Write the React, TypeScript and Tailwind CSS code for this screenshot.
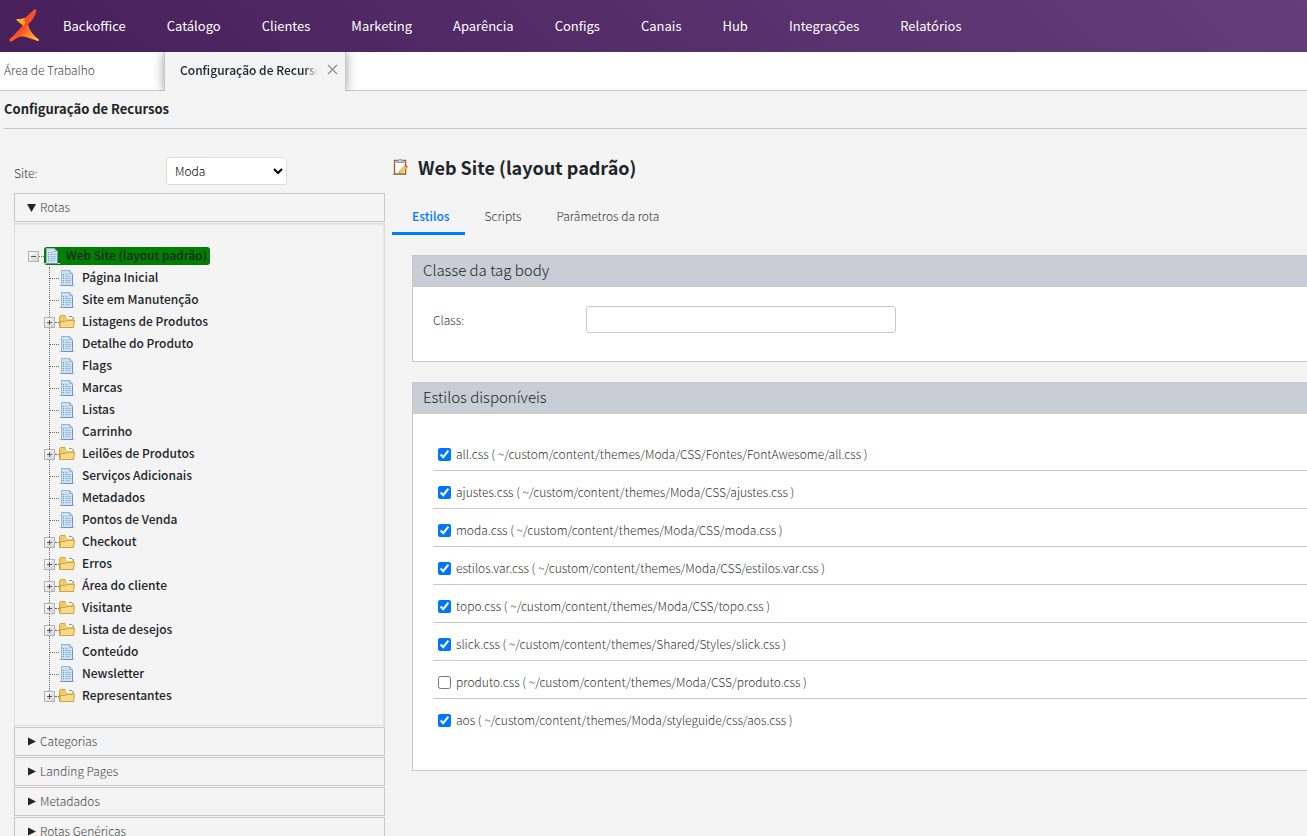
import React, { useState } from "react";
import { X } from "lucide-react";

const nav = ["Backoffice", "Catálogo", "Clientes", "Marketing", "Aparência", "Configs", "Canais", "Hub", "Integrações", "Relatórios"];

type Route = { name: string; folder?: boolean };

const routes: Route[] = [
  { name: "Página Inicial" },
  { name: "Site em Manutenção" },
  { name: "Listagens de Produtos", folder: true },
  { name: "Detalhe do Produto" },
  { name: "Flags" },
  { name: "Marcas" },
  { name: "Listas" },
  { name: "Carrinho" },
  { name: "Leilões de Produtos", folder: true },
  { name: "Serviços Adicionais" },
  { name: "Metadados" },
  { name: "Pontos de Venda" },
  { name: "Checkout", folder: true },
  { name: "Erros", folder: true },
  { name: "Área do cliente", folder: true },
  { name: "Visitante", folder: true },
  { name: "Lista de desejos", folder: true },
  { name: "Conteúdo" },
  { name: "Newsletter" },
  { name: "Representantes", folder: true },
];

const styles = [
  { name: "all.css", path: "~/custom/content/themes/Moda/CSS/Fontes/FontAwesome/all.css", on: true },
  { name: "ajustes.css", path: "~/custom/content/themes/Moda/CSS/ajustes.css", on: true },
  { name: "moda.css", path: "~/custom/content/themes/Moda/CSS/moda.css", on: true },
  { name: "estilos.var.css", path: "~/custom/content/themes/Moda/CSS/estilos.var.css", on: true },
  { name: "topo.css", path: "~/custom/content/themes/Moda/CSS/topo.css", on: true },
  { name: "slick.css", path: "~/custom/content/themes/Shared/Styles/slick.css", on: true },
  { name: "produto.css", path: "~/custom/content/themes/Moda/CSS/produto.css", on: false },
  { name: "aos", path: "~/custom/content/themes/Moda/styleguide/css/aos.css", on: true },
];

function Logo() {
  return (
    <svg viewBox="12 15 96 102" className="h-[34px] w-8" aria-hidden="true">
      <defs>
        <linearGradient id="blade" x1="1" y1="0" x2="0" y2="1">
          <stop offset="0" stopColor="#ff6a26" />
          <stop offset="0.5" stopColor="#ff4424" />
          <stop offset="1" stopColor="#ff5a24" />
        </linearGradient>
        <linearGradient id="body" x1="0" y1="0.2" x2="1" y2="0.8">
          <stop offset="0.1" stopColor="#ff4322" />
          <stop offset="0.5" stopColor="#ff6a22" />
          <stop offset="1" stopColor="#ffbe2c" />
        </linearGradient>
      </defs>
      <path d="M60 60L72 58C74 74 84 92 104 106C106 110 104 112 100 111C84 106 66 96 48 98C38 100 30 108 22 112C17 113 15 109 18 105C34 92 46 76 60 60Z" fill="url(#body)" />
      <path d="M90 18C94 14 98 17 96 23C92 38 84 50 72 60C62 70 54 84 44 98C36 102 28 110 22 112C17 113 15 109 18 105C32 94 46 78 58 62L60 46Z" fill="url(#blade)" />
      <path d="M40 45C47 44 56 44 66 41L72 50L59 66C52 60 44 56 38 49C36 47 37 45 40 45Z" fill="#ffab2a" />
      <path d="M90 18C94 14 98 17 96 23C92 38 84 50 72 60L60 64C66 56 64 50 58 48Z" fill="#ff4c25" />
    </svg>
  );
}

function PageIcon() {
  return (
    <svg viewBox="0 0 16 16" className="size-4 shrink-0" aria-hidden="true">
      <path d="M0 15.500H16" stroke="#c9ccd0" />
      <path d="M2.500 .5H10.500L13.500 3.500V15.500H2.500Z" fill="#cde1f4" stroke="#93b6d6" />
      <path d="M2.500 15.500H13.500V5" fill="none" stroke="#7093c4" />
      <path d="M10.500 .5V3.500H13.500Z" fill="#f4fafe" stroke="#8fb2d4" />
      <path d="M6 4.500H9M6 6.500H12M6 8.500H12M6 10.500H12M6 12.500H11" stroke="#a3bed9" />
      <path d="M4 4.500H5M4 8.500H5M4 12.500H5" stroke="#5aa05f" />
      <path d="M4 6.500H5M4 10.500H5" stroke="#7186cb" />
    </svg>
  );
}

function FolderIcon() {
  return (
    <svg viewBox="0 0 16 16" className="size-4 shrink-0" aria-hidden="true">
      <path d="M.5 13.500V2.500L1.500 1.500H6L7.500 3.500H14.500V13.500Z" fill="#f0cb6e" stroke="#d3a23f" />
      <path d="M7 2H13V5H8Z" fill="#fff" />
      <path d="M10 2H13V3H10Z" fill="#4aa5ec" />
      <path d="M1 13.500L1.500 7.500H6.500L8 6.500H15.500L14.500 13.500Z" fill="#f9d98a" stroke="#d3a23f" />
    </svg>
  );
}

function Expander({ open }: { open?: boolean }) {
  return (
    <svg viewBox="0 0 11 11" className="size-[11px] shrink-0" aria-hidden="true">
      <defs>
        <linearGradient id="box" x1="0" y1="0" x2="1" y2="1">
          <stop offset="0" stopColor="#fff" />
          <stop offset="1" stopColor="#cfcfcf" />
        </linearGradient>
      </defs>
      <rect x=".5" y=".5" width="10" height="10" fill="url(#box)" stroke="#b4b4b4" />
      <path d={open ? "M3 5.500H8" : "M3 5.500H8M5.500 3V8"} stroke="#555" />
    </svg>
  );
}

function NotepadIcon() {
  return (
    <svg viewBox="0 0 16 16" className="size-4 shrink-0" aria-hidden="true">
      <path d="M0 15.500H15" stroke="#cfcfcf" />
      <path d="M2.500 1.500H13.500V15H2.500Z" fill="#fff" stroke="#9a6232" strokeWidth="1.400" />
      <path d="M4.500 3.500V1.500H6.500L7.500 .5H9L10 1.500H12V3.500Z" fill="#c9c9c9" stroke="#8a8a8a" strokeWidth=".8" />
      <path d="M7 14.500L7.500 12L13 6.800L15 8.800L9.500 14Z" fill="#f2d35c" stroke="#a98724" strokeWidth=".7" />
      <path d="M13 6.800L14 6L15.800 7.800L15 8.800Z" fill="#d8434b" />
    </svg>
  );
}

function Accordion({ title, open }: { title: string; open?: boolean }) {
  return (
    <button className="flex h-[29px] w-full items-center gap-1 border border-[#c8c8c8] px-3 text-left text-xs font-light text-[#444]">
      <svg viewBox="0 0 9 9" className="size-[9px] fill-[#212529]" aria-hidden="true">
        <path d={open ? "M0 1H9L4.500 9Z" : "M1 0.500L9 4.500L1 8.500Z"} />
      </svg>
      <span className="pb-0.5">{title}</span>
    </button>
  );
}

function Panel({ title, children }: { title: string; children: React.ReactNode }) {
  return (
    <section className="border border-r-0 border-[#c8c8c8] bg-white">
      <h2 className="flex h-[31px] items-center border-b border-[#c8c8c8] bg-[#c8ced5] px-[10px] pb-0.5 text-[15px] font-light text-[#212529]">{title}</h2>
      {children}
    </section>
  );
}

export default function App() {
  const [tab, setTab] = useState("Estilos");
  return (
    <div className="min-h-screen overflow-x-hidden bg-[#f4f4f4] font-['Noto_Sans_CJK_SC',sans-serif] text-xs text-[#212529]">
      <header className="flex h-[52px] items-center bg-linear-[45deg,#461f5b,#643d7a] pl-2">
        <Logo />
        <nav className="ml-[23px] flex gap-[41px] text-[13px] text-white">
          {nav.map((n) => (
            <a key={n} href="#" className="whitespace-nowrap">{n}</a>
          ))}
        </nav>
      </header>

      <div className="flex h-[39px] bg-white">
        <a href="#" className="flex w-[164px] items-center border-b border-[#c8c8c8] px-1 pb-0.5 font-light text-[#444]">Área de Trabalho</a>
        <div className="flex w-[182px] items-center border-x border-[#c8c8c8] bg-[#f4f4f4] pb-1 pl-[15px] shadow-[0_0_10px_rgba(0,0,0,0.4)] [clip-path:inset(0_-12px_0_-12px)]">
          <a href="#" className="w-[138px] overflow-hidden whitespace-nowrap font-medium mask-r-from-90%">Configuração de Recursos</a>
          <button aria-label="Fechar aba" className="ml-1.5 text-[#888]">
            <X size={17} strokeWidth={1.5} />
          </button>
        </div>
        <div className="flex-1 border-b border-[#c8c8c8]" />
      </div>

      <h1 className="ml-1 flex h-[38px] items-center border-b border-[#c8c8c8] pb-0.5 text-[13px] font-bold">Configuração de Recursos</h1>

      <div className="flex">
        <aside className="w-[385px] shrink-0 pl-[14px] pt-7">
          <div className="flex h-9 items-start">
            <label htmlFor="site" className="w-[152px] pt-2 font-light text-[#333]">Site:</label>
            <select id="site" className="h-7 w-[121px] rounded-[3px] border border-[#ddd] bg-white px-1 pb-0.5 text-xs font-light text-black">
              <option>Moda</option>
            </select>
          </div>
          <div className="flex flex-col gap-px">
            <Accordion title="Rotas" open />
            <div className="border border-[#ddd]">
              <div className="border-r border-t border-dotted border-[#ddd] pb-[18px] pl-[13px] pt-5">
                <div className="flex h-[22px] items-center">
                  <Expander open />
                  <span className="w-[5px] border-t border-dotted border-[#666]" />
                  <a href="#" className="flex h-[18px] items-center gap-1.5 rounded-[3px] bg-[#008000] pr-[3px] font-medium">
                    <PageIcon />
                    <span className="pb-0.5">Web Site (layout padrão)</span>
                  </a>
                </div>
                <ul className="relative ml-4 before:absolute before:bottom-4 before:left-[5px] before:top-0 before:border-l before:border-dotted before:border-[#666]">
                  {routes.map((r) => (
                    <li key={r.name} className="relative flex h-[22px] items-center">
                      <span className="flex w-[15px] items-center">
                        {r.folder ? (
                          <>
                            <Expander />
                            <span className="flex-1 border-t border-dotted border-[#666]" />
                          </>
                        ) : (
                          <span className="ml-[5px] flex-1 border-t border-dotted border-[#666]" />
                        )}
                      </span>
                      <a href="#" className="flex items-center gap-[7px] font-medium">
                        {r.folder ? <FolderIcon /> : <PageIcon />}
                        <span className="pb-0.5">{r.name}</span>
                      </a>
                    </li>
                  ))}
                </ul>
              </div>
            </div>
            <Accordion title="Categorias" />
            <Accordion title="Landing Pages" />
            <Accordion title="Metadados" />
            <Accordion title="Rotas Genéricas" />
          </div>
        </aside>

        <main className="min-w-0 flex-1 pl-[7px] pt-[22px]">
          <h2 className="flex h-8 items-center gap-[10px] text-lg font-bold">
            <NotepadIcon />
            Web Site (layout padrão)
          </h2>
          <div role="tablist" className="mt-4 flex h-9">
            {["Estilos", "Scripts", "Parâmetros da rota"].map((t) => (
              <button
                key={t}
                role="tab"
                aria-selected={t === tab}
                onClick={() => setTab(t)}
                className={
                  t === tab
                    ? "border-b-[3px] border-[#007bff] pl-5 pr-[15px] font-medium text-[#007bff]"
                    : "border-b-[3px] border-transparent pl-5 pr-[15px] font-light text-[#333]"
                }
              >
                {t}
              </button>
            ))}
          </div>
          <div className="flex flex-col gap-5 pl-5 pt-5">
            <Panel title="Classe da tag body">
              <div className="flex items-center px-5 pb-7 pt-[19px]">
                <label htmlFor="class" className="w-[153px] font-light text-[#333]">Class:</label>
                <input id="class" type="text" className="h-[27px] w-[310px] rounded-[3px] border border-[#c8c8c8] px-2" />
              </div>
            </Panel>
            <Panel title="Estilos disponíveis">
              <ul className="pb-[33px] pl-5 pt-[19px]">
                {styles.map((s) => (
                  <li key={s.name} className="flex h-[38px] items-end border-b border-[#c8c8c8] pb-2 last:border-transparent">
                    <label className="flex items-center gap-[5px] pl-[5px] font-light text-[#333]">
                      <input type="checkbox" defaultChecked={s.on} className="size-[13px] accent-[#0075ff]" />
                      {s.name} ( {s.path} )
                    </label>
                  </li>
                ))}
              </ul>
            </Panel>
          </div>
        </main>
      </div>
    </div>
  );
}
